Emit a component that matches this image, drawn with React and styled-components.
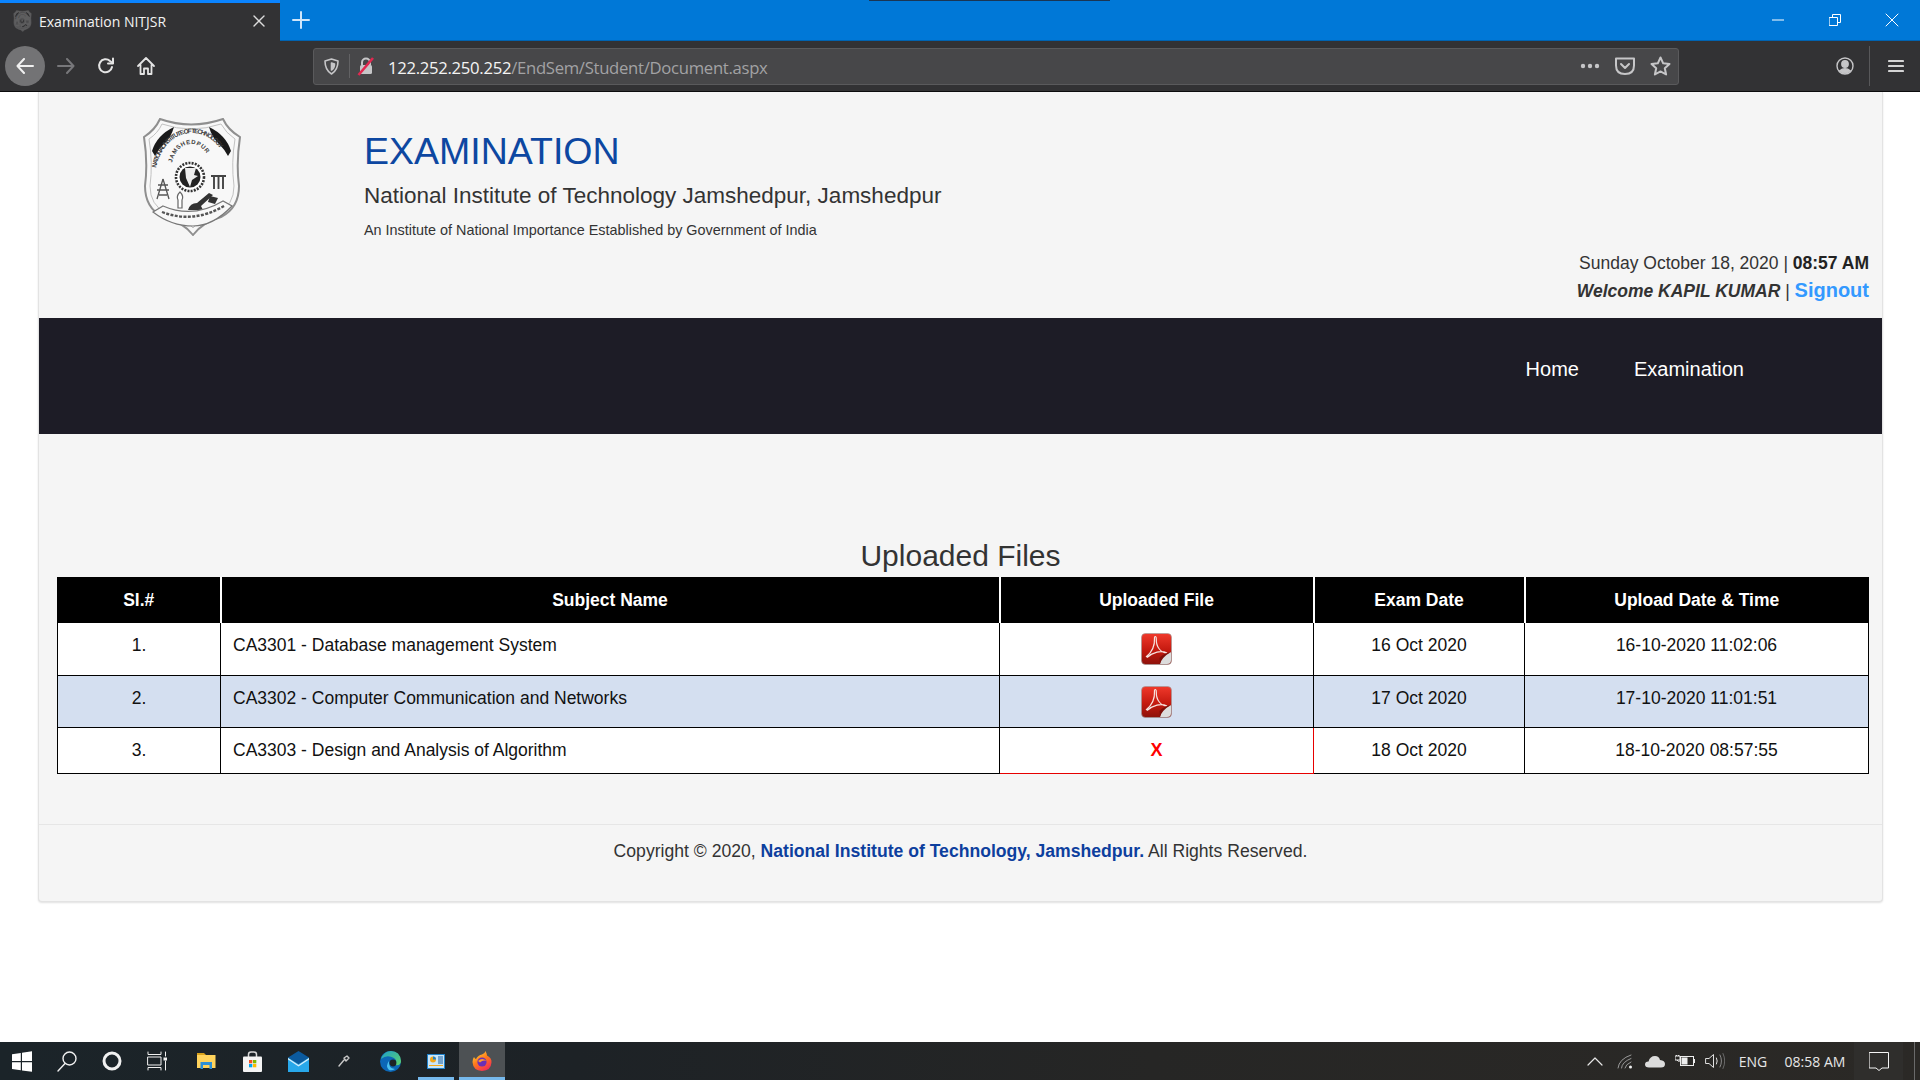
import React from 'react';
import styled, { createGlobalStyle } from 'styled-components';

const GlobalStyle = createGlobalStyle`
  html, body { margin: 0; padding: 0; height: 100%; overflow: hidden; background: #fff; }
  #root { height: 100%; }
  * { box-sizing: border-box; }
`;

const Screen = styled.div`
  display: flex;
  flex-direction: column;
  width: 1920px;
  height: 1080px;
  font-family: "Liberation Sans", Arial, sans-serif;
`;

/* ---------- browser chrome ---------- */
const TabStrip = styled.div`
  position: relative;
  display: flex;
  height: 41px;
  flex: none;
  background: #0078d7;
  border-bottom: 1px solid #0063b1;
  &::before {
    content: '';
    position: absolute;
    top: 0;
    left: 869px;
    width: 241px;
    height: 1px;
    background: #1a3553;
  }
`;

const Tab = styled.div`
  display: flex;
  align-items: center;
  width: 280px;
  height: 41px;
  padding: 0 15px 2px 13px;
  background: #323234;
  border-top: 3px solid #0a84ff;
  color: #f2f2f2;
  font-family: "Open Sans", sans-serif;
  font-size: 14px;
  letter-spacing: 0;
  & .fav { display: flex; margin-right: 7px; opacity: 0.22; }
  & .title { flex: 1; }
`;

const NewTab = styled.div`
  display: flex;
  align-items: center;
  justify-content: center;
  width: 42px;
  height: 40px;
`;

const WindowButtons = styled.div`
  display: flex;
  margin-left: auto;
`;

const WindowButton = styled.div`
  display: flex;
  align-items: center;
  justify-content: center;
  width: 57px;
  height: 40px;
`;

const Toolbar = styled.div`
  display: flex;
  align-items: center;
  height: 51px;
  flex: none;
  padding-left: 5px;
  background: #323234;
  border-bottom: 1px solid #0c0c0d;
`;

const BackCircle = styled.div`
  display: flex;
  align-items: center;
  justify-content: center;
  width: 40px;
  height: 40px;
  border-radius: 50%;
  background: #737375;
  margin-right: 1px;
`;

const ToolIcon = styled.div`
  display: flex;
  align-items: center;
  justify-content: center;
  width: ${(p) => p.$w || 40}px;
  height: 40px;
  flex: none;
`;

const UrlBar = styled.div`
  display: flex;
  align-items: center;
  width: 1366px;
  height: 37px;
  margin-left: 147px;
  padding: 0 7px 0 0;
  background: #474749;
  border: 1px solid #5a5a5c;
  border-radius: 3px;
  font-family: "Open Sans", sans-serif;
  font-size: 16.7px;
  letter-spacing: -0.3px;
  color: #a2a2a4;
  & b { font-weight: 400; color: #f4f4f4; }
  & .sep { width: 1px; height: 24px; background: #626264; margin: 0 6px 0 0; }
  & .url { margin: 2px 0 0 12px; flex: 1; }
`;

const Spacer = styled.div`
  flex: 1;
`;

const ToolSep = styled.div`
  width: 1px;
  height: 40px;
  background: #58585a;
  margin: 0 6px 0 4px;
`;

const HamburgerSlot = styled(ToolIcon)`
  margin-right: 4px;
`;

/* ---------- page ---------- */
const Page = styled.div`
  flex: 1;
  min-height: 0;
  overflow: hidden;
`;

const Container = styled.div`
  width: 1845px;
  height: 810px;
  margin-left: 38px;
  background: #f5f5f5;
  border: 1px solid #e3e3e3;
  border-top: none;
  border-radius: 0 0 4px 4px;
  box-shadow: 0 1px 2px rgba(0, 0, 0, 0.12);
  color: #333;
`;

const Header = styled.header`
  display: flex;
  height: 226px;
`;

const LogoBox = styled.div`
  width: 325px;
  flex: none;
  padding: 26px 0 0 104px;
`;

const Heading = styled.div`
  padding-top: 36px;
  & h1 {
    margin: 0;
    font-size: 37.5px;
    line-height: 46px;
    font-weight: 400;
    color: #0d47a1;
  }
  & h2 {
    margin: 9px 0 0;
    font-size: 22.5px;
    line-height: 26px;
    font-weight: 400;
    color: #333;
  }
  & p {
    margin: 13px 0 0;
    font-size: 14.4px;
    line-height: 16px;
    color: #333;
  }
`;

const Stamp = styled.div`
  margin-left: auto;
  padding: 157px 13px 0 0;
  text-align: right;
  font-size: 17.5px;
  white-space: nowrap;
  & .line { display: block; height: 27px; line-height: 28px; }
  & strong { color: #222; }
  & em { font-weight: 700; }
  & a { font-size: 20px; font-weight: 700; color: #3399ff; text-decoration: none; }
`;

const Nav = styled.nav`
  display: flex;
  justify-content: flex-end;
  align-items: center;
  gap: 55px;
  height: 116px;
  padding: 0 138px 14px 0;
  background: #1d1c26;
  color: #fff;
  font-size: 20px;
`;

const Title = styled.h3`
  margin: 0;
  padding-top: 103px;
  height: 143px;
  text-align: center;
  font-size: 30px;
  line-height: 38px;
  font-weight: 400;
  color: #333;
`;

const Table = styled.table`
  width: 1811px;
  margin-left: 18px;
  border-collapse: collapse;
  table-layout: fixed;
  font-size: 17.5px;
  color: #111;
`;

const Th = styled.th`
  height: 45px;
  padding: 2px 0 0;
  background: #000;
  color: #fff;
  font-weight: 700;
  border-right: 2px solid #fff;
  &:last-child { border-right: 1px solid #000; }
  &:first-child { border-left: 1px solid #000; }
`;

const Row = styled.tr`
  background: ${(p) => (p.$alt ? '#d4dff0' : '#fff')};
  height: ${(p) => p.$h}px;
`;

const Td = styled.td`
  padding: ${(p) => (p.$icon ? '10px 0 0' : '12px 0 0')};
  vertical-align: top;
  text-align: ${(p) => (p.$left ? 'left' : 'center')};
  padding-left: ${(p) => (p.$left ? '12px' : '0')};
  border: 1.5px solid ${(p) => (p.$red ? '#e60000' : '#000')};
  line-height: 20px;
  & svg { display: block; margin: 0 auto; }
`;

const Missing = styled.span`
  color: #f00;
  font-weight: 700;
  font-size: 18px;
`;

const Footer = styled.footer`
  margin-top: 50px;
  padding-top: 15px;
  border-top: 1px solid #e6e6e6;
  text-align: center;
  font-size: 17.6px;
  line-height: 22px;
  color: #333;
  & b { color: #0d3f9e; }
`;

/* ---------- taskbar ---------- */
const Taskbar = styled.div`
  display: flex;
  height: 38px;
  flex: none;
  background: linear-gradient(90deg, #1b2429 0%, #1d2226 30%, #262625 60%, #2b2926 100%);
`;

const SystemButtons = styled.div`
  display: flex;
  margin-right: 4px;
`;

const TaskItem = styled.div`
  position: relative;
  display: flex;
  align-items: center;
  justify-content: center;
  width: ${(p) => p.$w || 46}px;
  height: 38px;
  flex: none;
  background: ${(p) => (p.$active ? '#4d5154' : 'transparent')};
  &::after {
    content: '';
    display: ${(p) => (p.$open ? 'block' : 'none')};
    position: absolute;
    left: ${(p) => (p.$active ? 0 : '5px')};
    right: ${(p) => (p.$active ? 0 : '5px')};
    bottom: 0;
    height: 3px;
    background: #76b9ed;
  }
`;

const Tray = styled.div`
  display: flex;
  align-items: center;
  margin-left: auto;
  height: 38px;
  color: #e6e6e6;
  font-family: "Open Sans", sans-serif;
  font-size: 14px;
`;

const TrayIcon = styled.div`
  display: flex;
  align-items: center;
  justify-content: center;
  width: 30px;
  height: 38px;
`;

const TrayText = styled.div`
  width: ${(p) => p.$w}px;
  text-align: center;
  white-space: nowrap;
`;

const Notify = styled.div`
  display: flex;
  align-items: center;
  justify-content: center;
  width: 49px;
  height: 38px;
  background: #2f2e2c;
`;

const Peek = styled.div`
  width: 6px;
  height: 38px;
  margin-left: 11px;
  border-left: 1px solid #6a6a6a;
`;

/* ---------- drawings ---------- */
const Crest = ({ width, height, id = 'crest' }) => (
  <svg width={width} height={height} viewBox="0 0 98 118">
    <defs>
      <path id={`${id}Outer`} d="M13 50 C18 26 34 15 49 15 C64 15 80 26 85 50" />
      <path id={`${id}Inner`} d="M29 45 C32 32 40 26 48 26 C56 26 64 32 68 45" />
    </defs>
    <path d="M17 1 Q48 12 80 1 Q85 12 97 19 Q93 45 96 68 Q96 90 78 99 Q60 104 50 117 Q40 104 20 99 Q2 90 2 68 Q5 45 1 19 Q12 12 17 1 Z" fill="#f8f8f8" stroke="#8f8f8f" strokeWidth="2" />
    <path d="M19 6 Q48 16 78 6 Q83 15 92 21 Q88 45 91 68 Q91 87 75 95 Q58 100 50 110 Q42 100 23 95 Q7 87 7 68 Q10 45 6 21 Q15 15 19 6 Z" fill="none" stroke="#c2c2c2" strokeWidth="1" />
    <path d="M9 33 Q14 17 31 9 Q28 20 20 27 Q15 32 12 38 Z" fill="#1a1a1a" />
    <path d="M88 33 Q83 17 66 9 Q69 20 77 27 Q82 32 85 38 Z" fill="#1a1a1a" />
    <text fontSize="6.4" fontWeight="700" fill="#3a3a3a" fontFamily="Liberation Sans, sans-serif">
      <textPath href={`#${id}Outer`} textLength="88">NATIONAL INSTITUTE OF TECHNOLOGY</textPath>
    </text>
    <text fontSize="6" fontWeight="700" fill="#3a3a3a" fontFamily="Liberation Sans, sans-serif">
      <textPath href={`#${id}Inner`} textLength="48">JAMSHEDPUR</textPath>
    </text>
    <circle cx="47" cy="59" r="14" fill="#fff" stroke="#333" strokeWidth="2.6" strokeDasharray="2 1.2" />
    <circle cx="47" cy="59" r="10.5" fill="#222" />
    <path d="M42 50 L53 50 L51 57 L55 58 L49 62 L47 69 L43 60 Z" fill="#eee" />
    <path d="M20 61 L14 81 M20 61 L26 81 M15 67 H25 M14 72 H26 M16 77 L24 77" stroke="#555" strokeWidth="1.3" fill="none" />
    <path d="M68 58 H83 M71 59 V71 M75.5 59 V71 M80 59 V71" stroke="#444" strokeWidth="1.9" fill="none" />
    <path d="M35 90 V82 Q33 78 37 74 Q41 78 39 82 V90 Z" fill="#fff" stroke="#666" strokeWidth="1.2" />
    <path d="M45 92 Q47 85 54 85 L66 75 L70 77 L58 88 L60 92 Z" fill="#333" />
    <path d="M67 78 L75 80 L72 86 L65 84 Z" fill="#333" />
    <path d="M10 94 L20 88 Q50 101 80 83 L89 88 Q70 108 50 108 Q28 108 10 94 Z" fill="#f8f8f8" stroke="#777" strokeWidth="1.2" />
    <path d="M19 94 Q50 106 81 88" fill="none" stroke="#555" strokeWidth="2.4" strokeDasharray="3 1.4" />
  </svg>
);

const PdfIcon = ({ id }) => (
  <svg width="31" height="32" viewBox="0 0 31 32">
    <defs>
      <linearGradient id={id} x1="0" y1="0" x2="0" y2="1">
        <stop offset="0" stopColor="#f0392b" />
        <stop offset="0.55" stopColor="#c4190f" />
        <stop offset="1" stopColor="#8c120b" />
      </linearGradient>
    </defs>
    <rect x="0.5" y="0.5" width="30" height="31" rx="4" fill={`url(#${id})`} stroke="#9a9a9a" strokeWidth="0.6" />
    <path d="M5 24 C10 20 14 13 13.5 5 C13.3 2.8 15.5 3 15.3 6 C15 14 20 20 26 20 C20 17 12 19 6 24.5" fill="none" stroke="#f6e3e0" strokeWidth="1.2" />
    <path d="M19 31 Q19 23 30 19 L30 27 Q30 31 26 31 Z" fill="#dcdcdc" />
    <path d="M19 31 Q21 24 30 19 Q23 20 18.5 25 Z" fill="#7d0e08" />
  </svg>
);

const Stroke = ({ w = 16, h = 16, vb, children, color = '#e8e8e8', sw = 1.6 }) => (
  <svg width={w} height={h} viewBox={vb || `0 0 ${w} ${h}`} fill="none" stroke={color} strokeWidth={sw} strokeLinecap="round" strokeLinejoin="round">
    {children}
  </svg>
);

const WinLogo = () => (
  <svg width="20" height="21" viewBox="0 0 20 21" fill="#fff">
    <path d="M0 3.2 L8.8 2 V10 H0 Z M10 1.8 L20 0.3 V10 H10 Z M0 11.2 H8.8 V19.2 L0 18 Z M10 11.2 H20 V20.8 L10 19.4 Z" />
  </svg>
);

const Explorer = () => (
  <svg width="19" height="18" viewBox="0 0 19 18">
    <path d="M0 1 H7 L9 3 H0 Z" fill="#d9a21b" />
    <path d="M0 3 H18.5 V16 H0 Z" fill="#ffd35c" />
    <path d="M3.5 17 V10 H15 V17 H12.5 V13 H6 V17 Z" fill="#2d8fd6" />
  </svg>
);

const Store = () => (
  <svg width="19" height="21" viewBox="0 0 19 21">
    <path d="M5.5 6 V3.5 Q5.5 1 8 1 H11 Q13.5 1 13.5 3.5 V6" fill="none" stroke="#d8d8d8" strokeWidth="1.5" />
    <rect y="5.5" width="19" height="15.5" rx="1" fill="#f4f4f4" />
    <rect x="6" y="9" width="3.3" height="3.3" fill="#f25022" />
    <rect x="10" y="9" width="3.3" height="3.3" fill="#7fba00" />
    <rect x="6" y="13" width="3.3" height="3.3" fill="#00a4ef" />
    <rect x="10" y="13" width="3.3" height="3.3" fill="#ffb900" />
  </svg>
);

const Mail = () => (
  <svg width="21" height="21" viewBox="0 0 21 21">
    <path d="M0 6.5 L10.5 0 L21 6.5 L10.5 13 Z" fill="#0b5a9e" />
    <path d="M0 6.5 L10.5 13 L21 6.5 V21 H0 Z" fill="#28a8ea" />
    <path d="M0 7 L10.5 14 L21 7 V8.5 L10.5 15.5 L0 8.5 Z" fill="#d8eefb" />
  </svg>
);

const Edge = () => (
  <svg width="21" height="21" viewBox="0 0 21 21">
    <defs>
      <linearGradient id="edgeTop" x1="0" y1="0" x2="1" y2="1">
        <stop offset="0" stopColor="#1fa0c8" />
        <stop offset="1" stopColor="#5fd36a" />
      </linearGradient>
    </defs>
    <circle cx="10.5" cy="10.5" r="10.5" fill="#0c67b7" />
    <path d="M1 8 Q4 0 11 0 Q20 0 21 10 Q21 15 15 14 Q18 10 14 7 Q7 3 1 8 Z" fill="url(#edgeTop)" />
    <circle cx="13" cy="12" r="3.4" fill="#1d2226" />
    <path d="M9 10 Q8 17 15 18 Q12 20 9 19 Q5 15 9 10 Z" fill="#4ac0ee" />
  </svg>
);

const AppIcon = () => (
  <svg width="18" height="15" viewBox="0 0 18 15">
    <rect width="18" height="15" fill="#1f80c8" />
    <rect x="1" y="1" width="16" height="13" fill="#c9e6fa" />
    <circle cx="6" cy="5.5" r="3" fill="#f2a71b" />
    <path d="M6 5.5 V2.5 A3 3 0 0 1 9 5.5 Z" fill="#1f80c8" />
    <path d="M11 3 H16 M11 5 H16 M11 7 H16 M11 9 H16" stroke="#1f60a0" strokeWidth="1" />
    <path d="M2 11.5 H16" stroke="#f2a71b" strokeWidth="1" />
  </svg>
);

const Firefox = ({ size = 20 }) => (
  <svg width={size} height={size} viewBox="0 0 20 20">
    <defs>
      <linearGradient id="foxGrad" x1="0.2" y1="0" x2="0.8" y2="1">
        <stop offset="0" stopColor="#ffd23a" />
        <stop offset="0.45" stopColor="#ff7a1a" />
        <stop offset="1" stopColor="#f0245c" />
      </linearGradient>
    </defs>
    <path d="M2 6 Q3 8 4 8 Q6 4 10 3.5 Q13 2.5 13.5 0 Q15 3 15 4.5 Q20 7 19.5 11.5 Q19 19.5 10 20 Q1 19.5 0.5 11 Q0.5 8 2 6 Z" fill="url(#foxGrad)" />
    <circle cx="10" cy="11" r="4.6" fill="#6a2fb5" />
    <path d="M6 10 Q10 6 14.5 10 Q11 8.5 8 11.5 Z" fill="#ff9a2a" />
  </svg>
);

const rows = [
  { no: '1.', subject: 'CA3301 - Database management System', date: '16 Oct 2020', at: '16-10-2020 11:02:06', file: true, h: 53 },
  { no: '2.', subject: 'CA3302 - Computer Communication and Networks', date: '17 Oct 2020', at: '17-10-2020 11:01:51', file: true, h: 52, alt: true },
  { no: '3.', subject: 'CA3303 - Design and Analysis of Algorithm', date: '18 Oct 2020', at: '18-10-2020 08:57:55', file: false, h: 46 },
];

export default function App() {
  return (
    <Screen>
      <GlobalStyle />
      <TabStrip>
        <Tab>
          <span className="fav"><Crest width={19} height={22} id="favCrest" /></span>
          <span className="title">Examination NITJSR</span>
          <Stroke w={12} h={12} color="#dcdcdc" sw={1.4}><path d="M1 1 L11 11 M11 1 L1 11" /></Stroke>
        </Tab>
        <NewTab>
          <Stroke w={18} h={18} color="#cfe6fa" sw={2}><path d="M9 1 V17 M1 9 H17" /></Stroke>
        </NewTab>
        <WindowButtons>
          <WindowButton><Stroke w={12} h={2} color="#fff" sw={1}><path d="M0 1 H12" /></Stroke></WindowButton>
          <WindowButton>
            <Stroke w={12} h={12} color="#fff" sw={1}><path d="M0.5 3.5 H8.5 V11.5 H0.5 Z M3.5 3.5 V0.5 H11.5 V8.5 H8.5" /></Stroke>
          </WindowButton>
          <WindowButton><Stroke w={14} h={14} color="#fff" sw={1}><path d="M1 1 L13 13 M13 1 L1 13" /></Stroke></WindowButton>
        </WindowButtons>
      </TabStrip>

      <Toolbar>
        <BackCircle>
          <Stroke w={18} h={16} color="#f0f0f0" sw={2}><path d="M8 1 L1.5 8 L8 15 M2 8 H17" /></Stroke>
        </BackCircle>
        <ToolIcon>
          <Stroke w={18} h={16} color="#77777a" sw={2}><path d="M10 1 L16.5 8 L10 15 M16 8 H1" /></Stroke>
        </ToolIcon>
        <ToolIcon>
          <Stroke w={18} h={18} color="#e4e4e4" sw={2}>
            <path d="M15 10 A6.5 6.5 0 1 1 13 4 L15.5 6" /><path d="M16 1.5 V6.5 H11" />
          </Stroke>
        </ToolIcon>
        <ToolIcon>
          <Stroke w={20} h={20} color="#e4e4e4" sw={1.8}>
            <path d="M2 10 L10 2 L18 10 M4.5 8.5 V18 H8 V12.5 H12 V18 H15.5 V8.5" />
          </Stroke>
        </ToolIcon>
        <UrlBar>
          <ToolIcon $w={35}>
            <Stroke w={15} h={17} color="#c6c6c8" sw={1.6}>
              <path d="M7.5 1 L14 3 Q14 12 7.5 16 Q1 12 1 3 Z" /><path d="M7.5 5 L10.5 6 Q10.5 10 7.5 12 Z" fill="#c6c6c8" />
            </Stroke>
          </ToolIcon>
          <span className="sep" />
          <svg width="20" height="20" viewBox="0 0 20 20">
            <path d="M6 9 V6.5 A4 4 0 0 1 14 6.5 V9" fill="none" stroke="#c6c6c8" strokeWidth="2" />
            <rect x="4" y="9" width="12" height="9" rx="1.5" fill="#c6c6c8" />
            <path d="M2.5 19 L17 2" stroke="#e22850" strokeWidth="2.6" />
          </svg>
          <span className="url"><b>122.252.250.252</b>/EndSem/Student/Document.aspx</span>
          <svg width="20" height="6" viewBox="0 0 20 6" fill="#c6c6c8">
            <circle cx="3" cy="3" r="2.2" /><circle cx="10" cy="3" r="2.2" /><circle cx="17" cy="3" r="2.2" />
          </svg>
          <ToolIcon $w={50}>
            <Stroke w={20} h={18} color="#c6c6c8" sw={2}>
              <path d="M1 1.5 H19 V8.5 Q19 17 10 17 Q1 17 1 8.5 Z" /><path d="M6 7 L10 11 L14 7" />
            </Stroke>
          </ToolIcon>
          <Stroke w={21} h={20} color="#c6c6c8" sw={2}>
            <path d="M10.5 1.5 L13.2 7.3 L19.5 8 L14.8 12.3 L16.1 18.5 L10.5 15.4 L4.9 18.5 L6.2 12.3 L1.5 8 L7.8 7.3 Z" />
          </Stroke>
        </UrlBar>
        <Spacer />
        <ToolIcon>
          <Stroke w={18} h={18} color="#c6c6c8" sw={1.4}>
            <circle cx="9" cy="9" r="8" />
            <circle cx="9" cy="7" r="3.2" fill="#c6c6c8" />
            <path d="M3.5 14 Q9 9.5 14.5 14 Q9 18 3.5 14 Z" fill="#c6c6c8" />
          </Stroke>
        </ToolIcon>
        <ToolSep />
        <HamburgerSlot>
          <Stroke w={16} h={14} color="#d4d4d4" sw={2.2}><path d="M1 2 H15 M1 7 H15 M1 12 H15" /></Stroke>
        </HamburgerSlot>
      </Toolbar>

      <Page>
        <Container>
          <Header>
            <LogoBox><Crest width={98} height={118} /></LogoBox>
            <Heading>
              <h1>EXAMINATION</h1>
              <h2>National Institute of Technology Jamshedpur, Jamshedpur</h2>
              <p>An Institute of National Importance Established by Government of India</p>
            </Heading>
            <Stamp>
              <span className="line">Sunday October 18, 2020 | <strong>08:57 AM</strong></span>
              <span className="line"><em>Welcome KAPIL KUMAR</em> | <a href="#signout">Signout</a></span>
            </Stamp>
          </Header>

          <Nav>
            <span>Home</span>
            <span>Examination</span>
          </Nav>

          <Title>Uploaded Files</Title>

          <Table>
            <colgroup>
              <col style={{ width: 163 }} />
              <col style={{ width: 779 }} />
              <col style={{ width: 314 }} />
              <col style={{ width: 211 }} />
              <col style={{ width: 344 }} />
            </colgroup>
            <thead>
              <tr>
                <Th>Sl.#</Th>
                <Th>Subject Name</Th>
                <Th>Uploaded File</Th>
                <Th>Exam Date</Th>
                <Th>Upload Date &amp; Time</Th>
              </tr>
            </thead>
            <tbody>
              {rows.map((r) => (
                <Row key={r.no} $alt={r.alt} $h={r.h}>
                  <Td>{r.no}</Td>
                  <Td $left>{r.subject}</Td>
                  {r.file ? (
                    <Td $icon><PdfIcon id={`pdfRed${r.no[0]}`} /></Td>
                  ) : (
                    <Td $red><Missing>X</Missing></Td>
                  )}
                  <Td>{r.date}</Td>
                  <Td>{r.at}</Td>
                </Row>
              ))}
            </tbody>
          </Table>

          <Footer>
            Copyright © 2020, <b>National Institute of Technology, Jamshedpur.</b> All Rights Reserved.
          </Footer>
        </Container>
      </Page>

      <Taskbar>
        <SystemButtons>
          <TaskItem $w={44.75}><WinLogo /></TaskItem>
          <TaskItem $w={44.75}>
            <Stroke w={20} h={21} color="#f0f0f0" sw={1.4}>
              <circle cx="12.5" cy="7.5" r="6.5" /><path d="M8 12.5 L1 20" />
            </Stroke>
          </TaskItem>
          <TaskItem $w={44.75}>
            <Stroke w={20} h={20} color="#f0f0f0" sw={3}><circle cx="10" cy="10" r="8" /></Stroke>
          </TaskItem>
          <TaskItem $w={44.75}>
            <Stroke w={20} h={20} color="#f0f0f0" sw={1}>
              <path d="M1 1 V3.5 H14 V1 M1 6 H14 V14 H1 Z M1 19 V16.5 H14 V19 M18.5 1 V5 M18.5 10 V19" />
              <rect x="16.5" y="6.5" width="3.5" height="3" fill="#f0f0f0" stroke="none" />
            </Stroke>
          </TaskItem>
        </SystemButtons>
        <TaskItem><Explorer /></TaskItem>
        <TaskItem><Store /></TaskItem>
        <TaskItem><Mail /></TaskItem>
        <TaskItem>
          <Stroke w={12} h={12} color="#c8c8c8" sw={1.4}><path d="M1 11 L6 5 M6 3 L9 1 L11 3 L8 6 Z" /></Stroke>
        </TaskItem>
        <TaskItem><Edge /></TaskItem>
        <TaskItem $open><AppIcon /></TaskItem>
        <TaskItem $open $active><Firefox /></TaskItem>
        <Tray>
          <TrayIcon>
            <Stroke w={16} h={9} color="#e6e6e6" sw={1.2}><path d="M1 8 L8 1 L15 8" /></Stroke>
          </TrayIcon>
          <TrayIcon>
            <Stroke w={16} h={15} color="#9a9a9a" sw={1}>
              <path d="M1 14 Q2 5 14 1 M4.5 14 Q5 8 14 4.5 M8 14 Q8.5 10.5 14 8" />
              <circle cx="13.5" cy="13" r="1.5" fill="#f0f0f0" stroke="none" />
            </Stroke>
          </TrayIcon>
          <TrayIcon>
            <svg width="20" height="13" viewBox="0 0 20 13" fill="#dcdcdc">
              <path d="M4 12.5 Q0 12.5 0 9.5 Q0 6.5 3.5 6.5 Q5 1 10 1 Q14 1 15 5 Q20 5.5 20 9 Q20 12.5 16 12.5 Z" />
            </svg>
          </TrayIcon>
          <TrayIcon>
            <svg width="20" height="12" viewBox="0 0 20 12">
              <path d="M0 1 V5 H2 Q3 7 5 6 M1.5 1 V0 M3.5 1 V0 M0 1 H5 V5 H2" fill="none" stroke="#eee" strokeWidth="1" />
              <rect x="5.5" y="1.5" width="13" height="9" fill="none" stroke="#eee" strokeWidth="1" />
              <rect x="6.5" y="2.5" width="6" height="7" fill="#eee" />
              <rect x="19" y="4" width="1" height="4" fill="#eee" />
            </svg>
          </TrayIcon>
          <TrayIcon>
            <Stroke w={20} h={16} color="#e0e0e0" sw={1}>
              <path d="M1 5.5 H4 L8.5 1.5 V14.5 L4 10.5 H1 Z M11.5 5 Q13 8 11.5 11" />
              <path d="M15 2 Q18 8 15 14" stroke="#8a8a8a" />
              <path d="M18 0.5 Q21.5 8 18 15.5" stroke="#6a6a6a" />
            </Stroke>
          </TrayIcon>
          <TrayText $w={46}>ENG</TrayText>
          <TrayText $w={78}>08:58 AM</TrayText>
          <Notify>
            <Stroke w={20} h={19} color="#f4f4f4" sw={1}>
              <path d="M0.5 0.5 H19.5 V16 H13 L10 18.5 L7 16 H0.5 Z" />
            </Stroke>
          </Notify>
          <Peek />
        </Tray>
      </Taskbar>
    </Screen>
  );
}
